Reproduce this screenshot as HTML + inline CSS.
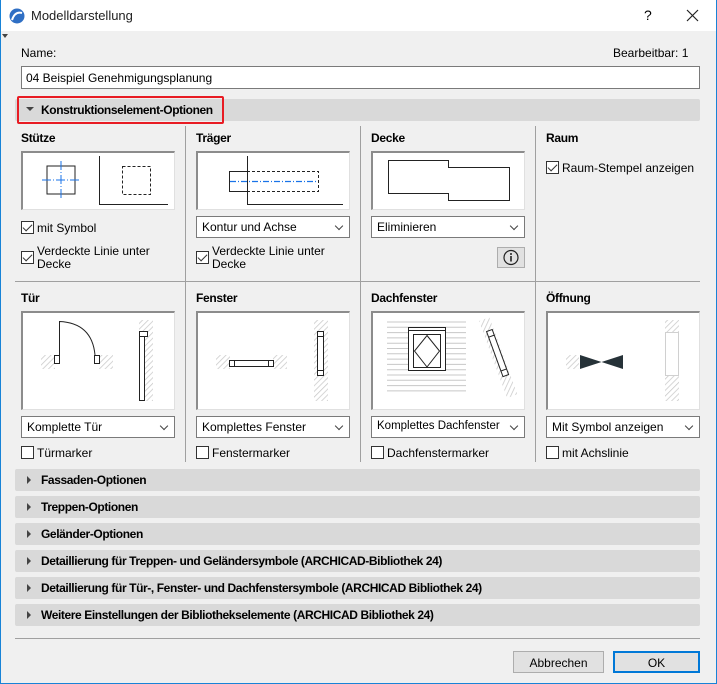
<!DOCTYPE html>
<html><head><meta charset="utf-8"><style>
*{box-sizing:border-box;margin:0;padding:0}
body{width:717px;height:684px;overflow:hidden;background:#f0f0f0;font-family:"Liberation Sans",sans-serif;font-size:12px;color:#000;position:relative}
.title{position:absolute;left:0;top:0;width:717px;height:31px;background:#fff}
.a{position:absolute;white-space:nowrap}
.b{font-weight:bold;letter-spacing:-0.3px}
.box{position:absolute;width:154px;background:#fff;border:2px solid #8c8c8c;border-right:1px solid #e0e0e0;border-bottom:1px solid #e0e0e0;border-top-width:2px}
.box svg{position:absolute;left:-2px;top:-2px}
.dd{position:absolute;width:154px;height:22px;background:#fff;border:1px solid #7a7a7a;padding:3px 0 0 5px}
.dd:after{content:"";position:absolute;right:7px;top:6px;width:5px;height:5px;border-right:1px solid #444;border-bottom:1px solid #444;transform:rotate(45deg)}
.cb{position:absolute;width:13px;height:13px;border:1px solid #333;background:#fff}
.cb.c:after{content:"";position:absolute;left:3px;top:0px;width:4px;height:8px;border-right:1.5px solid #333;border-bottom:1.5px solid #333;transform:rotate(45deg)}
.sec{position:absolute;left:15px;width:685px;height:22px;background:#d9d9d9;border-radius:2px}
.sec span{position:absolute;left:26px;top:4px;font-weight:bold;letter-spacing:-0.4px}
.sec i{position:absolute;left:12px;top:7px;width:0;height:0;border-left:4px solid #444;border-top:4px solid transparent;border-bottom:4px solid transparent}
.vl{position:absolute;width:1px;background:#a0a0a0}
.btn{position:absolute;height:22px;background:#e1e1e1;border:1px solid #adadad;text-align:center;padding-top:4px}
</style></head><body>
<svg width="0" height="0" style="position:absolute"><defs><pattern id="h" width="4" height="4" patternUnits="userSpaceOnUse" patternTransform="rotate(45)"><rect width="4" height="4" fill="#fff"/><line x1="0" y1="0" x2="0" y2="4" stroke="#c8c8c8" stroke-width="1.5"/></pattern></defs></svg>
<div class="title">
<svg class="a" style="left:9px;top:8px" width="16" height="16"><circle cx="8" cy="8" r="7.5" fill="#2f6fc4"/><path d="M3 12 Q6 3 13 5" stroke="#fff" stroke-width="2" fill="none"/></svg>
<div class="a" style="left:31px;top:8px;font-size:13px;color:#222">Modelldarstellung</div>
<div class="a" style="left:644px;top:7px;font-size:14px">?</div>
<svg class="a" style="left:686px;top:9px" width="13" height="13"><path d="M1 1L12 12M12 1L1 12" stroke="#222" stroke-width="1.2"/></svg>
</div>
<div class="a" style="left:0;top:0;width:1px;height:684px;background:#1883d7"></div>
<div class="a" style="left:716px;top:0;width:1px;height:684px;background:#1883d7"></div>
<div class="a" style="left:0;top:683px;width:717px;height:1px;background:#1883d7"></div>
<div class="a" style="left:2px;top:34px;width:0;height:0;border-top:4px solid #444;border-left:3px solid transparent;border-right:3px solid transparent"></div>
<div class="a" style="left:21px;top:46px">Name:</div>
<div class="a" style="left:613px;top:46px">Bearbeitbar: 1</div>
<div class="a" style="left:21px;top:66px;width:679px;height:23px;background:#fff;border:1px solid #7a7a7a;padding:4px 0 0 4px">04 Beispiel Genehmigungsplanung</div>
<div class="sec" style="top:99px"><i style="left:11px;top:8px;border-top:4px solid #444;border-left:4px solid transparent;border-right:4px solid transparent;border-bottom:none"></i><span>Konstruktionselement-Optionen</span></div>
<div class="a" style="left:17px;top:96px;width:207px;height:28px;border:2px solid #e81c24;border-radius:2px"></div>

<div class="vl" style="left:185px;top:126px;height:336px"></div>
<div class="vl" style="left:360px;top:126px;height:336px"></div>
<div class="vl" style="left:535px;top:126px;height:336px"></div>
<div class="a" style="left:15px;top:281px;width:685px;height:1px;background:#a0a0a0"></div>

<div class="a b" style="left:21px;top:131px">Stütze</div>
<div class="box" style="left:21px;top:151px;height:59px"><svg width="154" height="59"><rect x="26" y="15" width="28" height="28" fill="none" stroke="#222"/><path d="M21 29H60M40 10V48" stroke="#1a73e8" stroke-dasharray="9 2 1 2"/><path d="M78.5 5V53.5H147" stroke="#222" fill="none"/><rect x="101.5" y="15.5" width="28" height="28" fill="none" stroke="#222" stroke-dasharray="3 2"/></svg></div>
<div class="cb c" style="left:21px;top:221px"></div><div class="a" style="left:37px;top:221px">mit Symbol</div>
<div class="cb c" style="left:21px;top:251px"></div><div class="a" style="left:37px;top:245px;line-height:13px">Verdeckte Linie unter<br>Decke</div>

<div class="a b" style="left:196px;top:131px">Träger</div>
<div class="box" style="left:196px;top:151px;height:59px"><svg width="154" height="59"><path d="M51.5 5V53.5H147" stroke="#222" fill="none"/><path d="M51 20.5H122.5V40.5H51" stroke="#222" fill="none" stroke-dasharray="3 2"/><path d="M51 20.5H33.5V40.5H51" stroke="#222" fill="none"/><path d="M34 30.5H122" stroke="#1a73e8" stroke-width="1.2" stroke-dasharray="6 2 1 2"/></svg></div>
<div class="dd" style="left:196px;top:216px">Kontur und Achse</div>
<div class="cb c" style="left:196px;top:251px"></div><div class="a" style="left:212px;top:245px;line-height:13px">Verdeckte Linie unter<br>Decke</div>

<div class="a b" style="left:371px;top:131px">Decke</div>
<div class="box" style="left:371px;top:151px;height:59px"><svg width="154" height="59"><path d="M17.5 9.5H77.5V16.5H138.5V49.5H77.5V42.5H17.5Z" stroke="#222" fill="none"/></svg></div>
<div class="dd" style="left:371px;top:216px">Eliminieren</div>
<div class="a" style="left:497px;top:247px;width:28px;height:21px;background:#e1e1e1;border:1px solid #adadad"><svg width="26" height="19"><circle cx="13" cy="9.5" r="7" fill="none" stroke="#222" stroke-width="1.2"/><circle cx="13" cy="6" r="1" fill="#222"/><path d="M13 8V13.5" stroke="#222" stroke-width="1.6"/></svg></div>

<div class="a b" style="left:546px;top:131px">Raum</div>
<div class="cb c" style="left:546px;top:161px"></div><div class="a" style="left:562px;top:161px">Raum-Stempel anzeigen</div>

<div class="a b" style="left:21px;top:291px">Tür</div>
<div class="box" style="left:21px;top:311px;height:99px"><svg width="154" height="99"><rect x="20" y="44" width="14" height="14" fill="url(#h)"/><rect x="78" y="44" width="14" height="14" fill="url(#h)"/><rect x="33.5" y="44.5" width="5" height="8" fill="#fff" stroke="#222"/><rect x="73.5" y="44.5" width="5" height="8" fill="#fff" stroke="#222"/><path d="M38.5 52V10.5Q71 12 74 44" stroke="#222" fill="none"/><rect x="118" y="9" width="14" height="81" fill="url(#h)"/><rect x="118.5" y="20.5" width="5" height="69" fill="#fff" stroke="#222"/><rect x="118.5" y="20.5" width="8" height="5" fill="#fff" stroke="#222"/></svg></div>
<div class="dd" style="left:21px;top:416px">Komplette Tür</div>
<div class="cb" style="left:21px;top:446px"></div><div class="a" style="left:37px;top:446px">Türmarker</div>

<div class="a b" style="left:196px;top:291px">Fenster</div>
<div class="box" style="left:196px;top:311px;height:99px"><svg width="154" height="99"><rect x="20" y="44" width="14" height="14" fill="url(#h)"/><rect x="77" y="44" width="14" height="14" fill="url(#h)"/><rect x="33.5" y="49.5" width="44" height="6" fill="#fff" stroke="#222"/><path d="M38.5 49.5V55.5M72.5 49.5V55.5" stroke="#222"/><rect x="118" y="9" width="14" height="81" fill="url(#h)"/><rect x="121.5" y="20.5" width="6" height="44" fill="#fff" stroke="#222"/><path d="M121.5 25.5H127.5M121.5 59.5H127.5" stroke="#222"/></svg></div>
<div class="dd" style="left:196px;top:416px">Komplettes Fenster</div>
<div class="cb" style="left:196px;top:446px"></div><div class="a" style="left:212px;top:446px">Fenstermarker</div>

<div class="a b" style="left:371px;top:291px">Dachfenster</div>
<div class="box" style="left:371px;top:311px;height:99px"><svg width="154" height="99"><g stroke="#c8c8c8"><path d="M16 11H95M16 16.3H95M16 21.6H95M16 26.9H95M16 32.2H95M16 37.5H95M16 42.8H95M16 48.1H95M16 53.4H95M16 58.7H95M16 64H95M16 69.3H95M16 74.6H95M16 79.9H95"/></g><rect x="37.5" y="16.5" width="37" height="43" fill="#fff" stroke="#222"/><path d="M37.5 19.5H74.5" stroke="#222"/><rect x="42.5" y="23.5" width="27" height="33" fill="none" stroke="#222"/><path d="M56 24.5L68.5 40L56 56L43.5 40Z" fill="none" stroke="#222"/><g transform="translate(108 10) rotate(-20)"><rect x="0" y="0" width="11" height="82" fill="url(#h)"/><rect x="3.5" y="12.5" width="6" height="48" fill="#fff" stroke="#222"/><path d="M3.5 18.5H9.5M3.5 54.5H9.5" stroke="#222"/></g></svg></div>
<div class="dd" style="left:371px;top:416px;font-size:11.5px">Komplettes Dachfenster</div>
<div class="cb" style="left:371px;top:446px"></div><div class="a" style="left:387px;top:446px">Dachfenstermarker</div>

<div class="a b" style="left:546px;top:291px">Öffnung</div>
<div class="box" style="left:546px;top:311px;height:99px"><svg width="154" height="99"><rect x="20" y="44" width="58" height="14" fill="url(#h)"/><rect x="33" y="44" width="45" height="14" fill="#fff"/><path d="M34 44L55.5 51L77 44V58L55.5 51L34 58Z" fill="#263238"/><rect x="119" y="9" width="14" height="81" fill="url(#h)"/><rect x="119.5" y="21.5" width="13" height="43" fill="#fff" stroke="#d0d0d0"/></svg></div>
<div class="dd" style="left:546px;top:416px">Mit Symbol anzeigen</div>
<div class="cb" style="left:546px;top:446px"></div><div class="a" style="left:562px;top:446px">mit Achslinie</div>

<div class="sec" style="top:469px"><i></i><span>Fassaden-Optionen</span></div>
<div class="sec" style="top:496px"><i></i><span>Treppen-Optionen</span></div>
<div class="sec" style="top:523px"><i></i><span>Geländer-Optionen</span></div>
<div class="sec" style="top:550px"><i></i><span>Detaillierung für Treppen- und Geländersymbole (ARCHICAD-Bibliothek 24)</span></div>
<div class="sec" style="top:577px"><i></i><span>Detaillierung für Tür-, Fenster- und Dachfenstersymbole (ARCHICAD Bibliothek 24)</span></div>
<div class="sec" style="top:604px"><i></i><span>Weitere Einstellungen der Bibliothekselemente (ARCHICAD Bibliothek 24)</span></div>
<div class="a" style="left:15px;top:638px;width:685px;height:1px;background:#a0a0a0"></div>
<div class="btn" style="left:513px;top:651px;width:91px">Abbrechen</div>
<div class="btn" style="left:613px;top:651px;width:87px;border:2px solid #0078d7;padding-top:3px">OK</div>
</body></html>
